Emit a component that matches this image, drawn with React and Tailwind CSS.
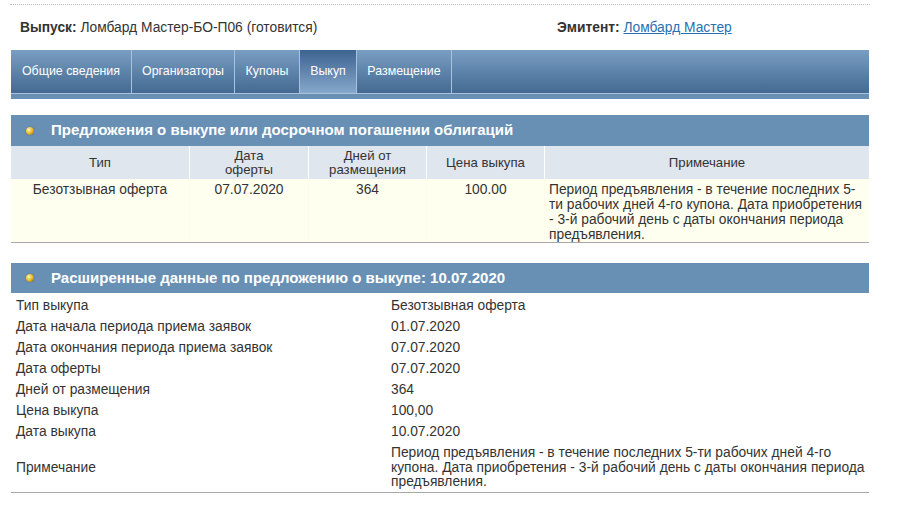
const font = { fontFamily: '"Liberation Sans", Arial, sans-serif' };

const tabs = [
  { label: "Общие сведения", w: "w-[121px]" },
  { label: "Организаторы", w: "w-[103px]" },
  { label: "Купоны", w: "w-[65px]" },
  { label: "Выкуп", w: "w-[57px]", active: true },
  { label: "Размещение", w: "w-[95px]" },
];

const details = [
  ["Тип выкупа", "Безотзывная оферта"],
  ["Дата начала периода приема заявок", "01.07.2020"],
  ["Дата окончания периода приема заявок", "07.07.2020"],
  ["Дата оферты", "07.07.2020"],
  ["Дней от размещения", "364"],
  ["Цена выкупа", "100,00"],
  ["Дата выкупа", "10.07.2020"],
];

const note =
  "Период предъявления - в течение последних 5-ти рабочих дней 4-го купона. Дата приобретения - 3-й рабочий день с даты окончания периода предъявления.";

function Bullet() {
  return (
    <span className="inline-block w-[8px] h-[8px] rounded-full bg-[radial-gradient(circle_at_35%_35%,#fff7b0,#e0b020_55%,#7a5c08)] shadow-[0_0_1px_#2d4f75]" />
  );
}

function SectionHeader({ children, h }) {
  return (
    <div className={`${h} bg-[#6890b5] flex items-center pl-[15px] gap-[17px]`}>
      <Bullet />
      <span className="text-white font-bold text-[15px]">{children}</span>
    </div>
  );
}

export default function App() {
  return (
    <div className="w-[901px] h-[511px] bg-white text-[#333] text-[13.8px]" style={font}>
      <div className="ml-[10px] w-[860px] pt-[4px]">
        <div className="border-t border-dotted border-[#bbb]" />
      </div>

      {/* issue line */}
      <div className="ml-[20px] mt-[15px] grid grid-cols-[537px_1fr] leading-[16px]">
        <div>
          <b>Выпуск:</b> Ломбард Мастер-БО-П06 (готовится)
        </div>
        <div>
          <b>Эмитент:</b>{" "}
          <a href="#" className="text-[#2a6fb0] underline">
            Ломбард Мастер
          </a>
        </div>
      </div>

      {/* tabs */}
      <div className="ml-[11px] mt-[14px] w-[858px]">
        <div className="h-[43px] flex bg-gradient-to-b from-[#7a9ec2] to-[#446a93]">
          {tabs.map((t) => (
            <div
              key={t.label}
              className={`${t.w} h-full flex items-center justify-center pb-[1px] text-white text-[12.4px] border-r border-[#a9c3dc] ${
                t.active ? "bg-gradient-to-b from-[#3d6390] to-[#86a8cb]" : ""
              }`}
            >
              {t.label}
            </div>
          ))}
        </div>
        <div className="h-[1px] bg-[#a9c3dc]" />
        <div className="h-[5px] bg-[#6a8fb5]" />
      </div>

      {/* offers table */}
      <div className="ml-[11px] mt-[16px] w-[858px]">
        <SectionHeader h="h-[31px]">
          Предложения о выкупе или досрочном погашении облигаций
        </SectionHeader>
        <div className="grid grid-cols-[179px_119px_118px_118px_1fr] bg-[#dfe6ed] h-[33px] text-[13.2px] leading-[14px] text-center">
          <div className="flex items-center justify-center border-r border-white">Тип</div>
          <div className="flex items-center justify-center border-r border-white">
            Дата
            <br />
            оферты
          </div>
          <div className="flex items-center justify-center border-r border-white">
            Дней от
            <br />
            размещения
          </div>
          <div className="flex items-center justify-center border-r border-white">Цена выкупа</div>
          <div className="flex items-center justify-center">Примечание</div>
        </div>
        <div className="grid grid-cols-[179px_119px_118px_118px_1fr] bg-[#fffff0] h-[64px] leading-[15px] border-b border-[#a8a8a8] text-center">
          <div className="pt-[3px] border-r border-[#fbfbe8]">Безотзывная оферта</div>
          <div className="pt-[3px] border-r border-[#fbfbe8]">07.07.2020</div>
          <div className="pt-[3px] border-r border-[#fbfbe8]">364</div>
          <div className="pt-[3px] border-r border-[#fbfbe8]">100.00</div>
          <div className="pt-[3px] pl-[4px] pr-[6px] text-left">{note}</div>
        </div>
      </div>

      {/* details */}
      <div className="ml-[11px] mt-[20px] w-[858px]">
        <SectionHeader h="h-[30px]">
          Расширенные данные по предложению о выкупе: 10.07.2020
        </SectionHeader>
        <div className="pt-[3px]">
          {details.map(([k, v]) => (
            <div key={k} className="grid grid-cols-[375px_1fr] h-[21px] items-center">
              <div className="pl-[5px]">{k}</div>
              <div className="pl-[5px]">{v}</div>
            </div>
          ))}
          <div className="grid grid-cols-[375px_1fr] items-center pt-[3px] pb-[2px] border-b border-[#a8a8a8] leading-[14.5px]">
            <div className="pl-[5px]">Примечание</div>
            <div className="pl-[5px] pr-[4px]">{note}</div>
          </div>
        </div>
      </div>
    </div>
  );
}
